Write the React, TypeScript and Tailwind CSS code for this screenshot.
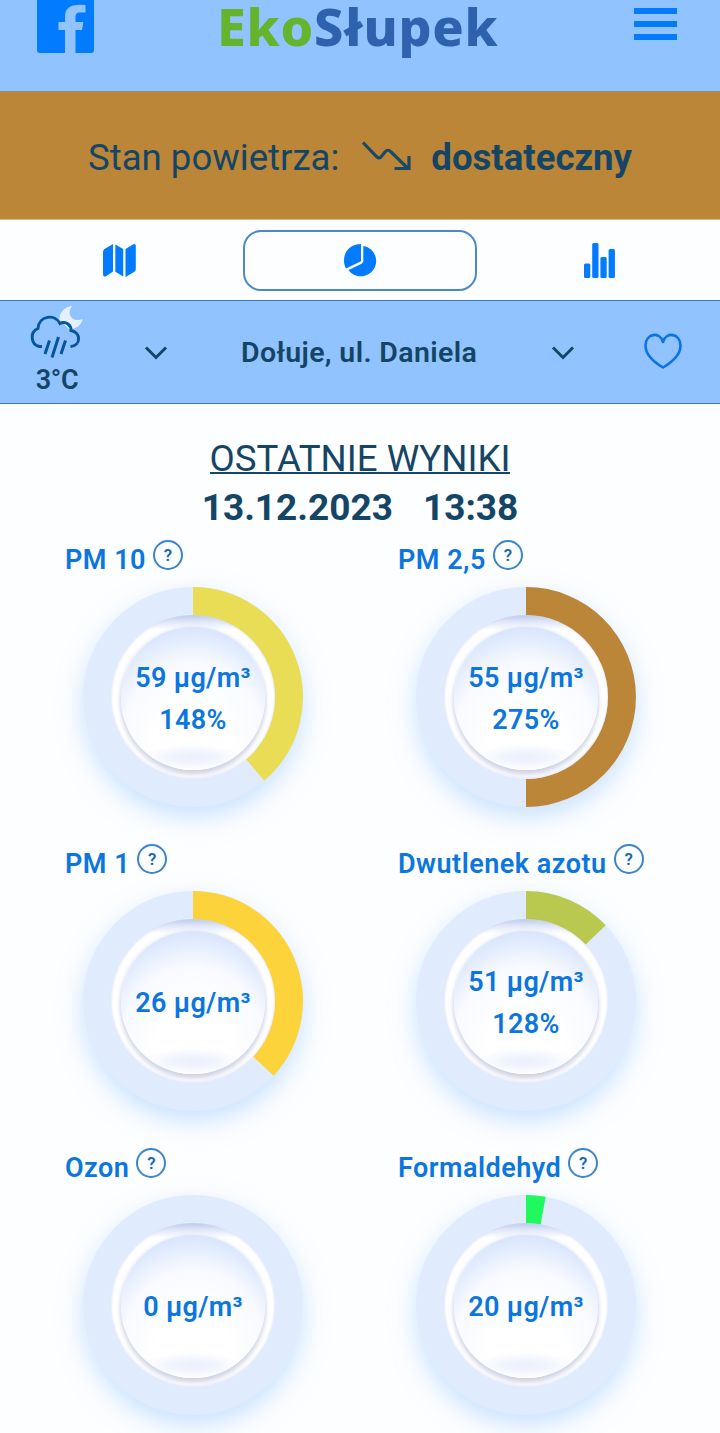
import React from "react";

type Gauge = {
  name: string;
  value: string;
  percent?: string;
  angle: number;
  color: string;
};

const gauges: Gauge[] = [
  { name: "PM 10", value: "59 µg/m³", percent: "148%", angle: 139.6, color: "#e9dd56" },
  { name: "PM 2,5", value: "55 µg/m³", percent: "275%", angle: 180, color: "#bb8638" },
  { name: "PM 1", value: "26 µg/m³", angle: 132.8, color: "#fdd33c" },
  { name: "Dwutlenek azotu", value: "51 µg/m³", percent: "128%", angle: 46.5, color: "#b9c950" },
  { name: "Ozon", value: "0 µg/m³", angle: 0, color: "#e0ebfd" },
  { name: "Formaldehyd", value: "20 µg/m³", angle: 10.3, color: "#1ff95e" },
];

function sector(angle: number, outer: number, inner: number) {
  const a = (angle * Math.PI) / 180;
  const s = Math.sin(a);
  const c = -Math.cos(a);
  return `M0 ${-outer}A${outer} ${outer} 0 0 1 ${outer * s} ${outer * c}L${inner * s} ${inner * c}A${inner} ${inner} 0 0 0 0 ${-inner}Z`;
}

function Dial({ gauge }: { gauge: Gauge }) {
  return (
    <div className="grid h-[220px] w-[220px] place-items-center rounded-full bg-[#e0ebfd] shadow-[0_10px_24px_0_rgba(150,200,255,0.5)]">
      <svg viewBox="-110 -110 220 220" className="col-start-1 row-start-1 h-[220px] w-[220px]">
        {gauge.angle > 0 && <path d={sector(gauge.angle, 110, 80)} fill={gauge.color} />}
      </svg>
      <div className="col-start-1 row-start-1 grid h-[164px] w-[164px] place-items-center rounded-full bg-[linear-gradient(180deg,#b9c9ec_0%,#dfe6f8_4%,#ffffff_9%,#ffffff_85%,#fafbff_100%)] pt-[2px] shadow-[inset_0_0_3px_0_#d3dbf0]">
        <div className="flex h-[143px] w-[144px] flex-col items-center justify-center rounded-full bg-[radial-gradient(ellipse_34%_9%_at_50%_91%,#ebf1fc_0%,#eff4fd_40%,transparent_100%),radial-gradient(ellipse_72%_82%_at_50%_82%,#ffffff_35%,#f8faff_70%,#d8e5fd_100%)] pt-[2px] text-[27px] font-semibold leading-[42px] tracking-[0.3px] text-[#0b76e0] shadow-[0_4px_5px_0_#cdd2e3,0_0_5px_0_#e5e8f4]">
          <span className="whitespace-nowrap">{gauge.value}</span>
          {gauge.percent && <span>{gauge.percent}</span>}
        </div>
      </div>
    </div>
  );
}

function Chevron() {
  return (
    <svg viewBox="0 0 24 16" className="mt-px h-4 w-6" fill="none" stroke="#154565" strokeWidth="3">
      <path d="M2 2.5 12 12.5 22 2.5" />
    </svg>
  );
}

export default function App() {
  return (
    <div className="h-[1433px] w-[720px] overflow-hidden bg-[#fdfeff] font-['Roboto',sans-serif] text-[#154565]">
      <header className="flex h-[91px] items-start bg-[#90c3ff] pl-[37px]">
        <svg viewBox="0 0 57 53" className="h-[53px] w-[57px]">
          <path d="M0 0h57v50a3 3 0 0 1-3 3H38.500V30H45l1.300-8H38.500v-4.500c0-3.500 1.200-5 4.500-5h5.500V5C33 3.500 28 8 28 17.500V22h-6.500v8H28v23H3a3 3 0 0 1-3-3Z" fill="#027bff" />
        </svg>
        <div className="ml-[123px] w-[417px] whitespace-nowrap font-['Noto_Sans',sans-serif] text-[52px] font-extrabold leading-[51px] tracking-[0.75px] text-[#2e62ae]">
          <span className="text-[#66b42e]">Eko</span>Słupek
        </div>
        <div className="mt-2 flex w-[43px] flex-col gap-[7px]">
          <i className="h-1.5 bg-[#027bff]" />
          <i className="h-1.5 bg-[#027bff]" />
          <i className="h-1.5 bg-[#027bff]" />
        </div>
      </header>

      <section className="flex h-[128px] items-center justify-center border-t border-[#9b8968] bg-[#bb8638] pt-[5px] text-[36.6px]">
        <span>Stan powietrza:</span>
        <svg viewBox="0 0 50 32" className="-mt-[4px] ml-[22px] mr-[20px] h-8 w-[50px]" fill="none" stroke="#1b4962" strokeWidth="3.200">
          <path d="m2 2.500 14 14.500q2 1.800 4 0l4-5q3-3.500 6 0L46.500 28M33.500 28.500H48V16" />
        </svg>
        <b className="font-bold">dostateczny</b>
      </section>

      <nav className="flex h-[81px] items-center border-t border-[#e2b77e]">
        <div className="flex w-[243px] justify-center pr-[6px]">
          <svg viewBox="0 0 34 33" className="mt-px h-[33px] w-[34px]" fill="#027bff">
            <path d="M1 8Q1 6 2.500 5L11 0V27.500L4 32.200Q1 33.500 1 30Z" />
            <path d="M13.300.5 21.200 5V32.500L13.300 27.800Z" />
            <path d="M23.500 5 31 .5Q33.800-.8 33.800 2V25Q33.800 27 32 28L23.500 33Z" />
          </svg>
        </div>
        <div className="flex h-[61px] w-[234px] items-center justify-center rounded-[18px] border-2 border-[#4a8ac6]">
          <svg viewBox="0 0 34 34" className="h-[34px] w-[34px]" fill="#027bff">
            <path d="M18 1V17.300Q18 18.300 17 18.800L3 25.600C-2.500 15 3.500 1 18 1Z" />
            <path d="M20.300 3C34.500 5.500 37.500 23 26.500 30.500 19.500 35.500 10 33.500 5.500 27L18.600 20.700Q20.300 19.800 20.300 18Z" />
          </svg>
        </div>
        <div className="flex flex-1 justify-center pl-0.5">
          <svg viewBox="0 0 31 35" className="mt-px h-[35px] w-[31px]" fill="#027bff">
            <rect x="0" y="20.500" width="6.300" height="14.500" rx="1.500" />
            <rect x="8.200" y="0" width="6.300" height="35" rx="1.500" />
            <rect x="16.400" y="14" width="6.300" height="21" rx="1.500" />
            <rect x="24.600" y="6" width="6.300" height="29" rx="1.500" />
          </svg>
        </div>
      </nav>

      <section className="flex h-[104px] items-center border-y-[1.5px] border-[#3b79b5] bg-[#90c3ff]">
        <div className="ml-[27px] flex w-[60px] flex-col items-center">
          <svg viewBox="0 0 58 56" className="-mt-[5px] h-[56px] w-[58px]" fill="none">
            <path d="M44 .8C36 2 31 8 31.500 15L41 24C48 24.500 53.500 20 54.700 14 44 18 38 9.500 44 .8Z" fill="#e5f0ff" />
            <path d="M14 41.500H11.500A9.500 9.500 0 0 1 10 23.500C11 10 27 9 32 18.500 38 15.500 43.500 20.500 43 25.500 53.500 27.500 53 41 42.500 41.500" stroke="#05559f" strokeWidth="2.900" />
            <path d="M21.500 35.500 17 49M30.500 32 24 52.500M37.500 35.500 33 49" stroke="#05559f" strokeWidth="3" />
          </svg>
          <span className="mt-[5px] text-[27px] font-semibold leading-7 tracking-[-0.3px]">3°C</span>
        </div>
        <div className="ml-[57px]"><Chevron /></div>
        <span className="ml-[73px] mt-[3px] w-[238px] whitespace-nowrap text-[28.5px] font-semibold tracking-[0.36px]">Dołuje, ul. Daniela</span>
        <div className="ml-[72px]"><Chevron /></div>
        <svg viewBox="0 0 38 36" className="ml-[69px] h-9 w-[38px] -mt-0.5" fill="none" stroke="#0b73ea" strokeWidth="2.600" strokeLinejoin="round">
          <path d="M19 34.500C8 28 1.500 21 1.500 12.500 1.500 1 15.500-2.500 19 9 22.500-2.500 36.500 1 36.500 12.500 36.500 21 30 28 19 34.500Z" />
        </svg>
      </section>

      <main>
        <div className="flex flex-col items-center pt-[33px]">
          <h1 className="h-[37px] border-b-2 border-[#154565] text-[36.7px] leading-[43px]">OSTATNIE WYNIKI</h1>
          <p className="mt-[9px] flex h-[50px] gap-[30px] text-[37px] font-bold leading-[50px]">
            <span>13.12.2023</span>
            <span>13:38</span>
          </p>
        </div>
        <div className="mt-[7px] grid grid-cols-[333px_333px] pl-[65px]">
          {gauges.map((g) => (
            <article key={g.name} className="h-[304px]">
              <div className="flex h-[47px] items-start gap-[7px]">
                <h2 className="whitespace-nowrap pt-[2px] text-[27px] font-semibold leading-[36px] tracking-[0.5px] text-[#0b76e0]">{g.name}</h2>
                <span className="grid h-[30px] w-[30px] place-items-center rounded-full border-2 border-[#3b85cb] text-[17px] font-semibold leading-none text-[#1669b9]">?</span>
              </div>
              <div className="pl-[18px]">
                <Dial gauge={g} />
              </div>
            </article>
          ))}
        </div>
      </main>
    </div>
  );
}
